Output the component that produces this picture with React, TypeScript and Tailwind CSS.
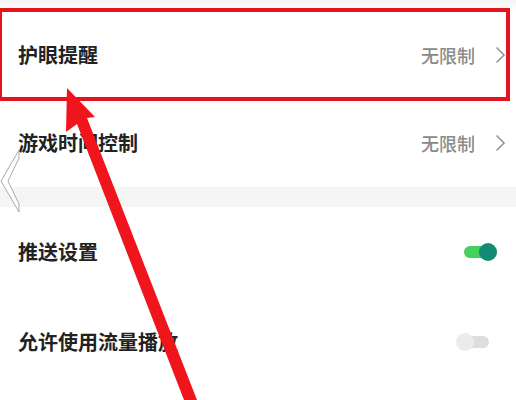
import React from "react";

const font = { fontFamily: '"Noto Sans CJK SC", "Noto Sans", sans-serif' };

function Chevron() {
  return (
    <svg width="11" height="18" viewBox="0 0 11 18" fill="none">
      <path d="M1.5 1.5 L9 9 L1.5 16.5" stroke="#999" strokeWidth="1.7" />
    </svg>
  );
}

function LinkRow({ label }: { label: string }) {
  return (
    <div className="flex h-[88px] items-center justify-between pl-[18px] pr-[10px]">
      <span className="text-[20px] font-semibold text-[#222]">{label}</span>
      <div className="flex items-center gap-[20px]">
        <span className="text-[18px] font-medium text-[#8a8a8a]">无限制</span>
        <Chevron />
      </div>
    </div>
  );
}

function Toggle({ on }: { on: boolean }) {
  return on ? (
    <div className="relative flex h-[18px] w-[33px] items-center">
      <div className="h-[12px] w-[26px] rounded-full bg-[#45cf5d]" />
      <div className="absolute right-0 h-[18px] w-[18px] rounded-full bg-[#138a73]" />
    </div>
  ) : (
    <div className="relative flex h-[18px] w-[33px] items-center">
      <div className="ml-[6px] h-[12px] w-[27px] rounded-full bg-[#dedede]" />
      <div className="absolute left-0 h-[18px] w-[18px] rounded-full bg-[#ececec]" />
    </div>
  );
}

function SwitchRow({ label, on, pr }: { label: string; on: boolean; pr: string }) {
  return (
    <div className={`flex h-[90px] items-center justify-between pl-[18px] ${pr}`}>
      <span className="text-[20px] font-semibold text-[#222]">{label}</span>
      <Toggle on={on} />
    </div>
  );
}

export default function App() {
  return (
    <div className="relative h-[400px] w-[516px] overflow-hidden bg-white" style={font}>
      <div className="h-[11px] bg-gradient-to-b from-[#f4f4f4] to-white" />
      <LinkRow label="护眼提醒" />
      <LinkRow label="游戏时间控制" />
      <div className="h-[20px] bg-[#f5f5f5]" />
      <SwitchRow label="推送设置" on pr="pr-[19px]" />
      <SwitchRow label="允许使用流量播放" on={false} pr="pr-[27px]" />

      {/* edge back-gesture indicator */}
      <svg className="absolute left-0 top-[148px]" width="24" height="66" viewBox="0 0 24 66">
        <path d="M19 2 L1 33 L19 64 L19 56 L8 33 L19 10 Z" fill="white" stroke="#a8a8a8" strokeWidth="1" />
      </svg>

      {/* red annotation box */}
      <div className="absolute left-[-2px] top-[8px] h-[93px] w-[512px] border-[4px] border-[#e5131b]" />

      {/* red annotation arrow */}
      <svg className="absolute left-0 top-0" width="516" height="400" viewBox="0 0 516 400">
        <polygon
          points="67,88 95,117 87,118 197,400 184,400 77,124 66,132"
          fill="#f0141c"
        />
      </svg>
    </div>
  );
}
